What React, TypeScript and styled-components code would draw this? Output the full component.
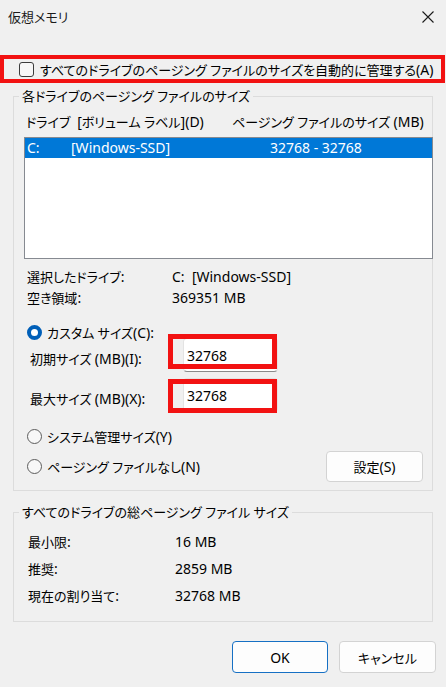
import React from "react";
import styled, { createGlobalStyle, css } from "styled-components";

const GlobalStyle = createGlobalStyle`
  html, body {
    margin: 0;
    padding: 0;
    background: #f0f0f0;
  }
  body {
    font-family: "Noto Sans", "Noto Sans CJK JP", sans-serif;
    font-size: 13px;
    color: #000;
    font-feature-settings: "palt";
  }
  * {
    box-sizing: border-box;
  }
`;

// Latin runs are set a little larger than the Japanese ones, like Segoe UI next to Yu Gothic UI
const T = ({ children }: { children: string }) => (
  <>
    {children
      .split(/([\x21-\x7e](?:[\x20-\x7e]*[\x21-\x7e])?)/)
      .map((part, i) => (/[\x21-\x7e]/.test(part) ? <Latin key={i}>{part}</Latin> : part))}
  </>
);

const App = () => {
  return (
    <>
      <GlobalStyle />
      <Window>
        <TitleBar>
          <Title>仮想メモリ</Title>
          <CloseButton aria-label="閉じる">
            <svg width="12" height="12" viewBox="0 0 12 12">
              <path d="M0.5 0.5 L11.5 11.5 M11.5 0.5 L0.5 11.5" stroke="#1b1b1b" strokeWidth="1.1" fill="none" />
            </svg>
          </CloseButton>
        </TitleBar>

        <AutoRow>
          <CheckBox />
          <span><T>すべてのドライブのページング ファイルのサイズを自動的に管理する(A)</T></span>
        </AutoRow>

        <Group>
          <Legend>各ドライブのページング ファイルのサイズ</Legend>
          <GroupBody>
            <ColumnHeader>
              <HeaderCell $width={206}><T>ドライブ  [ボリューム ラベル](D)</T></HeaderCell>
              <HeaderCell><T>ページング ファイルのサイズ (MB)</T></HeaderCell>
            </ColumnHeader>
            <DriveList>
              <DriveRow $selected>
                <Cell $width={44}>C:</Cell>
                <Cell $width={199}>[Windows-SSD]</Cell>
                <Cell>32768 - 32768</Cell>
              </DriveRow>
            </DriveList>

            <InfoGrid $col={145} $row={21} $indent={3} $top={7}>
              <span><T>選択したドライブ:</T></span>
              <Value>C:  [Windows-SSD]</Value>
              <span><T>空き領域:</T></span>
              <Value>369351 MB</Value>
            </InfoGrid>

            <RadioRow $gap={14}>
              <Radio $checked />
              <span><T>カスタム サイズ(C):</T></span>
            </RadioRow>

            <SizeGrid>
              <SizeLabel><T>初期サイズ (MB)(I):</T></SizeLabel>
              <FieldWrap>
                <Field readOnly value="32768" />
                <Highlight $top={-4} $height={35} />
              </FieldWrap>
              <SizeLabel><T>最大サイズ (MB)(X):</T></SizeLabel>
              <FieldWrap>
                <Field readOnly value="32768" />
                <Highlight $top={1} $height={34} />
              </FieldWrap>
            </SizeGrid>

            <RadioRow $gap={14}>
              <Radio />
              <span><T>システム管理サイズ(Y)</T></span>
            </RadioRow>

            <BottomRow>
              <RadioRow $gap={0}>
                <Radio />
                <span><T>ページング ファイルなし(N)</T></span>
              </RadioRow>
              <Button $width={97} $height={31}><T>設定(S)</T></Button>
            </BottomRow>
          </GroupBody>
        </Group>

        <Group $second>
          <Legend>すべてのドライブの総ページング ファイル サイズ</Legend>
          <TotalsBody>
            <InfoGrid $col={147} $row={27} $indent={4} $top={0}>
              <span><T>最小限:</T></span>
              <Value>16 MB</Value>
              <span><T>推奨:</T></span>
              <Value>2859 MB</Value>
              <span><T>現在の割り当て:</T></span>
              <Value>32768 MB</Value>
            </InfoGrid>
          </TotalsBody>
        </Group>

        <Footer>
          <Button $primary $width={96} $height={32}><Latin>OK</Latin></Button>
          <Button $width={97} $height={32}>キャンセル</Button>
        </Footer>
      </Window>
    </>
  );
};

const Latin = styled.span`
  font-size: 14px;
`;

const Window = styled.div`
  width: 446px;
  height: 687px;
  background: #f0f0f0;
  overflow: hidden;
`;

const TitleBar = styled.div`
  height: 34px;
  display: flex;
  align-items: center;
  justify-content: space-between;
  padding: 0 12px 0 8px;
`;

const Title = styled.div`
  font-size: 13px;
  color: #1b1b1b;
  line-height: 20px;
`;

const CloseButton = styled.div`
  width: 12px;
  height: 12px;
  display: flex;
`;

const AutoRow = styled.div`
  margin: 21px 1px 0 0;
  height: 28px;
  border: 4px solid #f21212;
  display: flex;
  align-items: center;
  gap: 6px;
  padding-left: 15px;
  white-space: nowrap;
`;

const CheckBox = styled.div`
  width: 15px;
  height: 15px;
  border: 1px solid #3c3c3c;
  border-radius: 3px;
  background: #f7f7f7;
  flex-shrink: 0;
`;

const Group = styled.fieldset<{ $second?: boolean }>`
  margin: ${(p) => (p.$second ? "11px" : "3px")} 13px 0;
  border: 1px solid #dcdcdc;
  padding: 0;
  min-width: 0;
`;

const Legend = styled.legend`
  margin-left: 5px;
  padding: 0 3px;
  line-height: 20px;
  font-size: 13px;
`;

const GroupBody = styled.div`
  padding: 6px 0 8px 10px;
`;

const TotalsBody = styled.div`
  padding: 6px 0 12px 10px;
`;

const ColumnHeader = styled.div`
  display: flex;
  height: 20px;
  line-height: 20px;
  padding-left: 2px;
  white-space: pre;
`;

const HeaderCell = styled.span<{ $width?: number }>`
  ${(p) => p.$width && css`width: ${p.$width}px;`}
  flex-shrink: 0;
`;

const DriveList = styled.div`
  margin: 5px -1px 0 0;
  height: 122px;
  border: 1px solid #868a91;
  background: #fff;
`;

const DriveRow = styled.div<{ $selected?: boolean }>`
  display: flex;
  height: 20px;
  line-height: 20px;
  padding-left: 2px;
  font-size: 14px;
  white-space: pre;
  background: ${(p) => (p.$selected ? "#0078d7" : "transparent")};
  color: ${(p) => (p.$selected ? "#fff" : "#000")};
`;

const Cell = styled.span<{ $width?: number }>`
  ${(p) => p.$width && css`width: ${p.$width}px;`}
  flex-shrink: 0;
`;

const InfoGrid = styled.div<{ $col: number; $row: number; $indent: number; $top: number }>`
  display: grid;
  grid-template-columns: ${(p) => p.$col}px auto;
  grid-auto-rows: ${(p) => p.$row}px;
  align-items: center;
  margin-top: ${(p) => p.$top}px;
  padding-left: ${(p) => p.$indent}px;
  white-space: pre;
`;

const Value = styled.span`
  font-size: 14px;
`;

const RadioRow = styled.div<{ $gap: number }>`
  display: flex;
  align-items: center;
  gap: 5px;
  height: 20px;
  margin-top: ${(p) => p.$gap}px;
  padding-left: 3px;
  white-space: nowrap;
`;

const Radio = styled.div<{ $checked?: boolean }>`
  width: 15px;
  height: 15px;
  border-radius: 50%;
  flex-shrink: 0;
  ${(p) =>
    p.$checked
      ? css`
          background: #fff;
          border: 4px solid #005fb8;
        `
      : css`
          background: #f7f7f7;
          border: 1px solid #5c5c5c;
        `}
`;

const SizeGrid = styled.div`
  display: grid;
  grid-template-columns: 159px 95px;
  grid-auto-rows: 34px;
  row-gap: 6px;
  margin-top: -4px;
`;

const SizeLabel = styled.span`
  padding: 6px 0 0 6px;
  display: flex;
  align-items: center;
  white-space: pre;
`;

const FieldWrap = styled.div`
  position: relative;
`;

const Field = styled.input`
  width: 95px;
  height: 34px;
  background: #fff;
  border: 1px solid #e3e3e3;
  border-bottom-color: #8a8a8a;
  border-radius: 4px;
  padding: 0 0 0 3px;
  font: inherit;
  font-size: 14px;
  color: #000;
  outline: none;
`;

const Highlight = styled.div<{ $top: number; $height: number }>`
  position: absolute;
  left: -15px;
  top: ${(p) => p.$top}px;
  width: 109px;
  height: ${(p) => p.$height}px;
  border: 5px solid #f21212;
  pointer-events: none;
`;

const BottomRow = styled.div`
  display: flex;
  align-items: center;
  justify-content: space-between;
  margin-top: 5px;
  padding-right: 9px;
  height: 31px;
`;

const Button = styled.button<{ $primary?: boolean; $width: number; $height: number }>`
  width: ${(p) => p.$width}px;
  height: ${(p) => p.$height}px;
  background: #fdfdfd;
  border: 1px solid ${(p) => (p.$primary ? "#1670c4" : "#d3d3d3")};
  border-radius: 4px;
  font: inherit;
  font-size: 13px;
  color: #000;
  padding: 0;
`;

const Footer = styled.div`
  display: flex;
  justify-content: flex-end;
  gap: 11px;
  margin-top: 19px;
  padding-right: 10px;
`;

export default App;
